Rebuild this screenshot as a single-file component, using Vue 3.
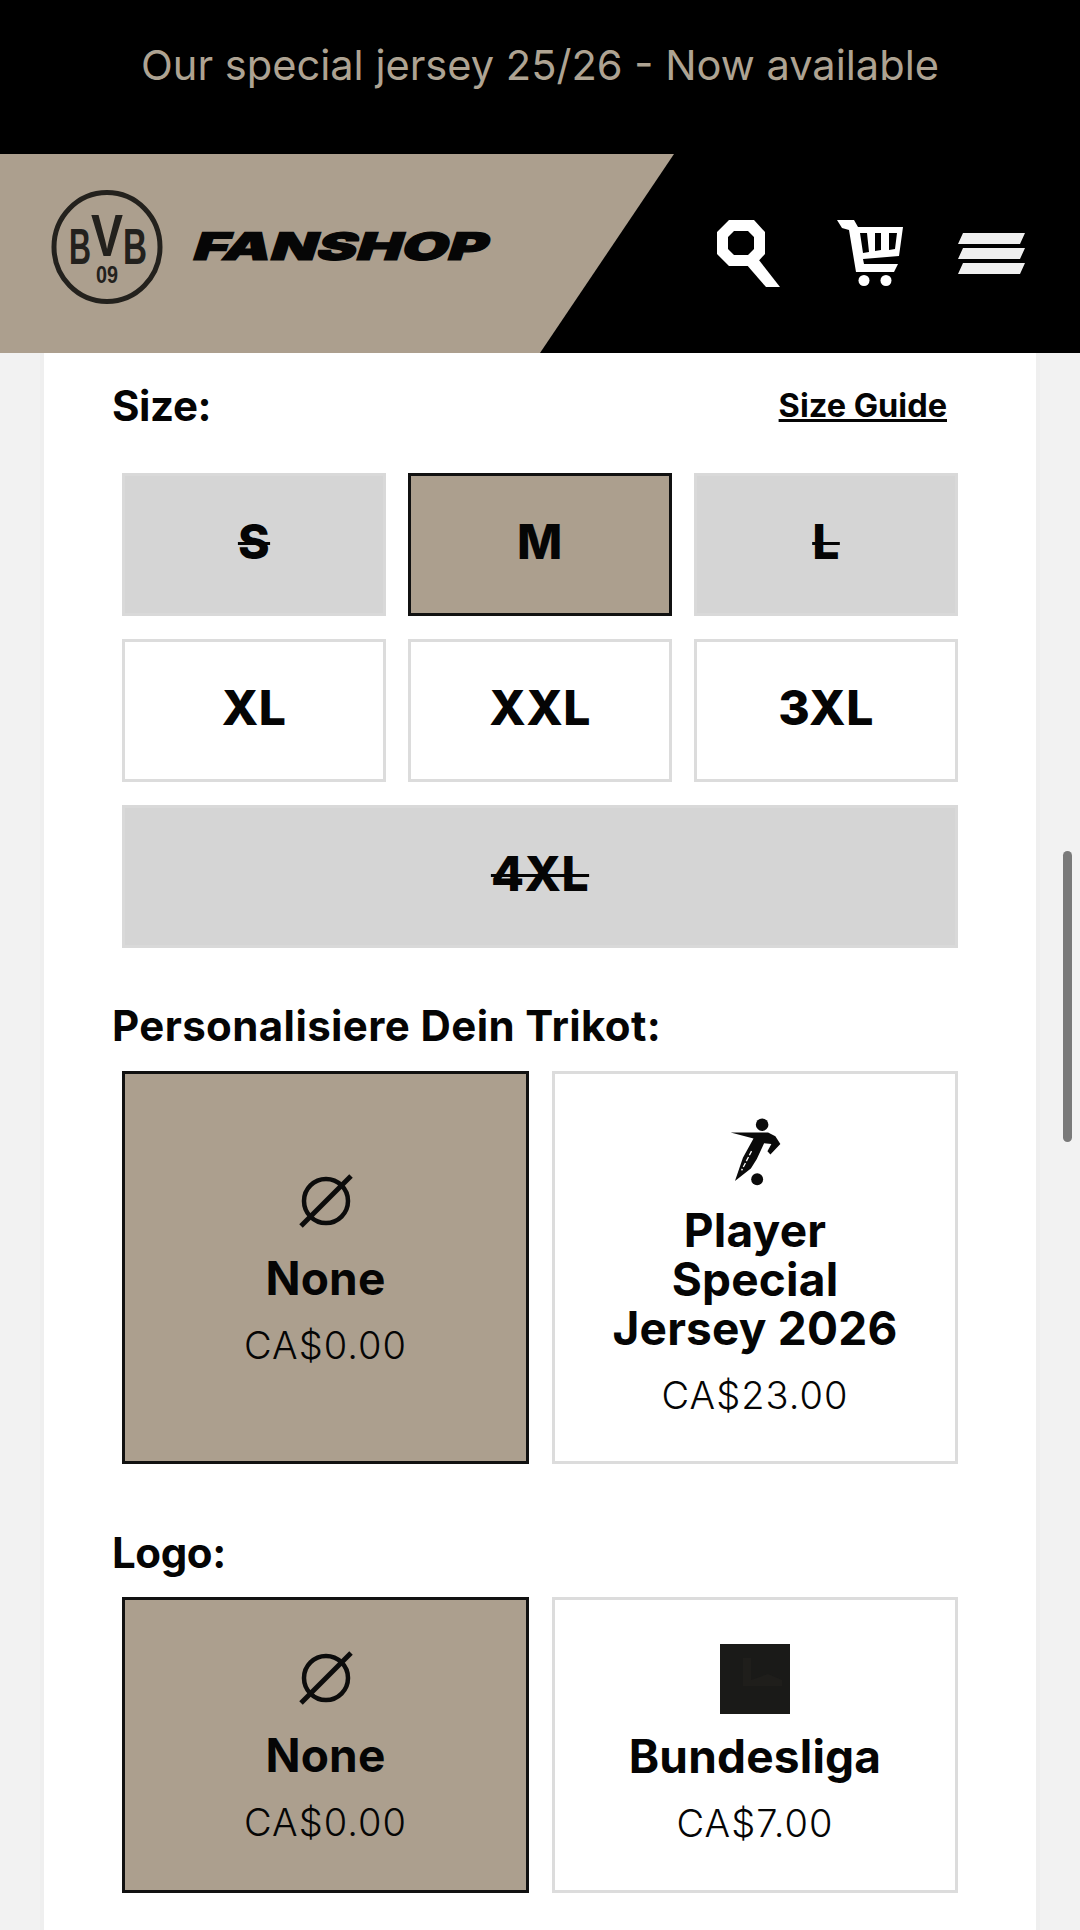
<script setup>
const sizes = [
  { label: 'S', state: 'off' },
  { label: 'M', state: 'on' },
  { label: 'L', state: 'off' },
  { label: 'XL', state: '' },
  { label: 'XXL', state: '' },
  { label: '3XL', state: '' },
  { label: '4XL', state: 'off', wide: true },
]
</script>

<template>
  <div class="page">
    <div class="promo">Our special jersey 25/26 - Now available</div>
    <header class="header">
      <div class="brand">
        <svg class="badge" viewBox="0 0 112 114" width="112" height="114">
          <ellipse cx="56" cy="57" rx="53" ry="54.5" fill="none" stroke="#23211d" stroke-width="5" />
          <text x="18" y="74" class="badge-b" textLength="22" lengthAdjust="spacingAndGlyphs">B</text>
          <text x="40" y="66" class="badge-v" textLength="32" lengthAdjust="spacingAndGlyphs">V</text>
          <text x="72" y="74" class="badge-b" textLength="24" lengthAdjust="spacingAndGlyphs">B</text>
          <text x="45" y="93" class="badge-n" textLength="22" lengthAdjust="spacingAndGlyphs">09</text>
        </svg>
        <svg class="wordmark" viewBox="0 0 320 40" width="320" height="40">
          <text x="0" y="34" class="wordmark-text" textLength="294" lengthAdjust="spacingAndGlyphs" transform="skewX(-18) translate(10 0)">FANSHOP</text>
        </svg>
      </div>
      <div class="actions">
        <svg class="icon-search" viewBox="0 0 63 67" width="63" height="67">
          <path fill="#fff" fill-rule="evenodd" d="M12 0H37L48 12V34L37 46H12L0 34V12ZM17 11L11 17V29L17 35H31L37 29V17L31 11Z" />
          <path fill="#fff" d="M38 35L63 67H49L29 44Z" />
        </svg>
        <svg class="icon-cart" viewBox="0 0 68 67" width="68" height="67">
          <path fill="#fff" fill-rule="evenodd" d="M0 0H17L21 7H66L62 36L26 39L27 44H61L57 52H19L12 10L5 8ZM23 13L26 33L32 32L30 13ZM38 13V31L44 30V13ZM52 13V30L58 29L60 13Z" />
          <circle cx="27" cy="60.5" r="5.5" fill="#fff" />
          <circle cx="49" cy="60.5" r="5.5" fill="#fff" />
        </svg>
        <svg class="icon-menu" viewBox="0 0 67 42" width="67" height="42">
          <path fill="#efefef" d="M5 0H67L62 11H0ZM5 15H67L62 26H0ZM5 30H67L62 41H0Z" />
        </svg>
      </div>
    </header>

    <main class="content">
      <div class="size-head">
        <h2 class="title title-short">Size:</h2>
        <a class="guide">Size Guide</a>
      </div>
      <div class="size-grid">
        <div
          v-for="s in sizes"
          :key="s.label"
          class="size"
          :class="{ off: s.state === 'off', on: s.state === 'on', wide: s.wide }"
        >{{ s.label }}</div>
      </div>

      <h2 class="title title-custom">Personalisiere Dein Trikot:</h2>
      <div class="cards cards-tall">
        <div class="card on">
          <svg class="none-icon" viewBox="0 0 54 54" width="54" height="54">
            <circle cx="27" cy="27" r="22" fill="none" stroke="#0c0c0c" stroke-width="4.5" />
            <path d="M2 52L52 2" stroke="#0c0c0c" stroke-width="5" />
          </svg>
          <div class="name">None</div>
          <div class="price">CA$0.00</div>
        </div>
        <div class="card">
          <svg class="player-icon" viewBox="0 0 160 205" width="53" height="68">
            <circle cx="100" cy="20" r="19" fill="#0a0a0a" />
            <path fill="#0a0a0a" d="M5 44H118L140 55L155 78L125 110L116 100L128 78L106 76L84 124L66 152L18 190L42 120L74 62Z" />
            <path d="M68 100L38 158" stroke="#fff" stroke-width="4" stroke-dasharray="14 6" />
            <circle cx="85" cy="185" r="18" fill="#0a0a0a" />
          </svg>
          <div class="name">Player<br />Special<br />Jersey 2026</div>
          <div class="price">CA$23.00</div>
        </div>
      </div>

      <h2 class="title title-short title-logo">Logo:</h2>
      <div class="cards cards-short">
        <div class="card on">
          <svg class="none-icon" viewBox="0 0 54 54" width="54" height="54">
            <circle cx="27" cy="27" r="22" fill="none" stroke="#0c0c0c" stroke-width="4.5" />
            <path d="M2 52L52 2" stroke="#0c0c0c" stroke-width="5" />
          </svg>
          <div class="name">None</div>
          <div class="price">CA$0.00</div>
        </div>
        <div class="card">
          <svg class="liga-icon" viewBox="0 0 70 70" width="70" height="70">
            <rect width="70" height="70" fill="#1a1a18" />
            <path fill="#1f1e1b" d="M23 14H31V36L48 30L62 36V42H23Z" />
          </svg>
          <div class="name">Bundesliga</div>
          <div class="price">CA$7.00</div>
        </div>
      </div>
    </main>

    <div class="scrollbar"></div>
  </div>
</template>

<style>
html, body {
  margin: 0;
  background: #f2f2f2;
}
</style>

<style scoped>
.page {
  position: relative;
  width: 1080px;
  height: 1930px;
  overflow: hidden;
  background: #f2f2f2;
  font-family: Inter, "Liberation Sans", sans-serif;
  color: #050505;
}
.promo {
  height: 154px;
  box-sizing: border-box;
  padding-top: 41px;
  background: #000;
  color: #aea392;
  font-size: 41.6px;
  line-height: 48px;
  text-align: center;
}
.header {
  position: relative;
  z-index: 1;
  height: 199px;
  display: flex;
  justify-content: space-between;
  background: #000;
}
.brand {
  width: 674px;
  box-sizing: border-box;
  padding-left: 51px;
  display: flex;
  align-items: center;
  background: #ac9f8e;
  clip-path: polygon(0 0, 100% 0, 540px 100%, 0 100%);
}
.badge {
  flex: none;
  margin-top: -13px;
}
.badge-b,
.badge-v,
.badge-n {
  font-family: "Liberation Sans", sans-serif;
  font-weight: 700;
  fill: #23211d;
}
.badge-b {
  font-size: 50px;
}
.badge-v {
  font-size: 60px;
}
.badge-n {
  font-size: 23px;
}
.wordmark {
  flex: none;
  margin: -15px 0 0 29px;
}
.wordmark-text {
  font-family: Inter, sans-serif;
  font-size: 38px;
  font-weight: 900;
  fill: #060606;
  stroke: #060606;
  stroke-width: 1.2;
}
.actions {
  display: flex;
  align-items: flex-start;
  padding: 66px 55px 0 0;
}
.icon-search {
  margin-right: 57px;
}
.icon-cart {
  margin-right: 53px;
}
.icon-menu {
  margin-top: 13px;
}
.content {
  margin: 0 44px;
  height: 1577px;
  box-sizing: border-box;
  padding: 33px 78px 0 68px;
  background: #fff;
  box-shadow: 0 0 0 4px #efefef;
}
.size-head {
  display: flex;
  justify-content: space-between;
  align-items: center;
  padding-right: 11px;
}
.title {
  margin: 0;
  font-size: 42px;
  line-height: 40px;
  font-weight: 700;
  letter-spacing: 0.4px;
}
.title-short {
  letter-spacing: -0.4px;
}
.guide {
  font-size: 32.5px;
  line-height: 40px;
  font-weight: 700;
  text-decoration: underline;
}
.size-grid {
  margin: 47px 0 0 10px;
  display: grid;
  grid-template-columns: repeat(3, 264px);
  grid-auto-rows: 143px;
  gap: 23px 22px;
}
.size {
  display: flex;
  align-items: center;
  justify-content: center;
  box-sizing: border-box;
  border: 3px solid #dcdcdc;
  padding-bottom: 6px;
  font-size: 48px;
  font-weight: 800;
  letter-spacing: 0.5px;
}
.size.off {
  background: #d5d5d5;
  border-color: #d9d9d9;
  text-decoration: line-through;
  text-decoration-thickness: 3px;
}
.size.on {
  background: #ac9f8e;
  border-color: #111;
}
.size.wide {
  grid-column: 1 / -1;
}
.title-custom {
  margin-top: 58px;
}
.title-logo {
  margin-top: 69px;
}
.cards {
  margin-left: 10px;
  display: grid;
  grid-template-columns: 407px 406px;
  gap: 23px;
}
.cards-tall {
  margin-top: 25px;
  height: 393px;
}
.cards-short {
  margin-top: 24px;
  height: 296px;
}
.card {
  display: flex;
  flex-direction: column;
  align-items: center;
  justify-content: center;
  box-sizing: border-box;
  border: 3px solid #dcdcdc;
  text-align: center;
}
.card.on {
  background: #ac9f8e;
  border-color: #111;
  padding-top: 6px;
}
.none-icon,
.player-icon,
.liga-icon {
  flex: none;
}
.none-icon {
  margin-bottom: 26px;
}
.player-icon {
  margin-bottom: 20px;
}
.liga-icon {
  margin-bottom: 18px;
}
.name {
  font-size: 46px;
  line-height: 49px;
  font-weight: 700;
  letter-spacing: 0.2px;
}
.price {
  margin-top: 19px;
  font-size: 38px;
  line-height: 46px;
  font-weight: 300;
  letter-spacing: 1px;
}
.scrollbar {
  position: absolute;
  left: 1063px;
  top: 851px;
  width: 9px;
  height: 291px;
  border-radius: 5px;
  background: #7a7a7a;
}
</style>
